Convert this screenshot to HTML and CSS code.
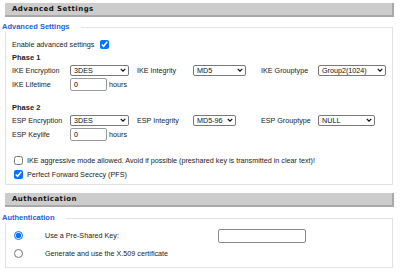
FILE: index.html
```html
<!DOCTYPE html>
<html lang="en">
<head>
  <meta charset="UTF-8" />
  <meta name="viewport" content="width=device-width,initial-scale=1.0" />
  <title>Advanced Settings</title>
  <link rel="stylesheet" href="styles.css">
</head>
<body>
  <div class="page">
    <div class="bar">Advanced Settings</div>
    <fieldset class="group adv">
      <legend>Advanced Settings</legend>
      <label class="enable">Enable advanced settings <input type="checkbox" checked></label>

      <!-- phase 1 -->
      <div class="phase">Phase 1</div>
      <div class="grid">
        <span>IKE Encryption</span>
        <span class="sel w59"><select><option>3DES</option></select><svg viewBox="0 0 8 5"><path d="M1 1l3 3 3-3"/></svg></span>
        <span>IKE Integrity</span>
        <span class="sel w53"><select><option>MD5</option></select><svg viewBox="0 0 8 5"><path d="M1 1l3 3 3-3"/></svg></span>
        <span>IKE Grouptype</span>
        <span class="sel w68"><select><option>Group2(1024)</option></select><svg viewBox="0 0 8 5"><path d="M1 1l3 3 3-3"/></svg></span>
        <span>IKE Lifetime</span>
        <span class="num"><input type="text" value="0"> hours</span>
      </div>

      <!-- phase 2 -->
      <div class="phase p2">Phase 2</div>
      <div class="grid">
        <span>ESP Encryption</span>
        <span class="sel w59"><select><option>3DES</option></select><svg viewBox="0 0 8 5"><path d="M1 1l3 3 3-3"/></svg></span>
        <span>ESP Integrity</span>
        <span class="sel w43"><select><option>MD5-96</option></select><svg viewBox="0 0 8 5"><path d="M1 1l3 3 3-3"/></svg></span>
        <span>ESP Grouptype</span>
        <span class="sel w57"><select><option>NULL</option></select><svg viewBox="0 0 8 5"><path d="M1 1l3 3 3-3"/></svg></span>
        <span>ESP Keylife</span>
        <span class="num"><input type="text" value="0"> hours</span>
      </div>

      <div class="checks">
        <label><input type="checkbox"> IKE aggressive mode allowed. Avoid if possible (preshared key is transmitted in clear text)!</label>
        <label><input type="checkbox" checked> Perfect Forward Secrecy (PFS)</label>
      </div>
    </fieldset>

    <div class="bar">Authentication</div>
    <fieldset class="group auth">
      <legend>Authentication</legend>
      <div class="radio-row">
        <input type="radio" name="auth" checked>
        <span class="rtext">Use a Pre-Shared Key:</span>
        <input type="text" class="psk">
      </div>
      <div class="radio-row">
        <input type="radio" name="auth">
        <span class="rtext">Generate and use the X.509 certificate</span>
      </div>
    </fieldset>
  </div>
</body>
</html>
```

FILE: styles.css
```css
:root{
  --bar-bg:#cccccc;
  --bar-line:#a9a9a9;
  --line:#e2e2e2;
  --blue:#1c63d8;
  --text:#222;
}
*{box-sizing:border-box;margin:0;padding:0}
body{font-family:"Liberation Sans",Arial,sans-serif;font-size:7.2px;color:var(--text);background:#fff}
.page{padding:3px 6px 0 5px;width:400px}

/* section bars */
.bar{height:14px;background:var(--bar-bg);border-bottom:2px solid var(--bar-line);border-right:2px solid var(--bar-line);padding:0 0 0 7px;font-family:"DejaVu Sans",Verdana,sans-serif;font-weight:bold;font-size:7px;letter-spacing:.45px;line-height:12px;color:#111}

/* groups */
.group{border:1px solid var(--line);padding:0 6px;margin:5px 1px 0 0}
.group legend{margin-left:-10px;padding:0 11px 0 0;font-weight:bold;font-size:7.5px;line-height:10px;color:var(--blue)}
.adv{padding-bottom:5px;margin-bottom:8px}
.auth{margin-top:6px;padding-bottom:7px}

.enable{display:flex;align-items:center;gap:6px;height:11px;margin-top:7px}
input[type=checkbox],input[type=radio]{width:9px;height:9px;margin:0}

.phase{font-weight:bold;font-size:7.5px;height:10px;line-height:10px;margin-top:3px}
.phase.p2{margin-top:12px}

.grid{display:grid;grid-template-columns:58px 67px 56px 68px 57px 1fr;grid-template-rows:12px 14px;row-gap:1px;align-items:center;margin-top:1px}
.grid>span{white-space:nowrap}
.grid .num{grid-column:2 / span 5;display:flex;align-items:center;gap:2px;height:14px}

.sel{position:relative;height:11px;display:block}
.sel select{appearance:none;-webkit-appearance:none;width:100%;height:11px;border:1px solid #7a7a7a;border-radius:2px;background:#fff;font-family:inherit;font-size:7.2px;line-height:9px;padding:0 0 0 3px;color:#111}
.sel svg{position:absolute;right:3px;top:3.5px;width:6px;height:4px;fill:none;stroke:#111;stroke-width:1.7}
.w59{width:59px}.w53{width:53px}.w68{width:68px}.w43{width:43px}.w57{width:57px}

.num input{width:37px;height:13px;border:1px solid #9a9a9a;border-radius:2px;font-family:inherit;font-size:7.2px;padding:0 3px}

.checks{margin-top:15px;display:flex;flex-direction:column;gap:5px}
.checks label{display:flex;align-items:center;gap:4px;height:9px;padding-left:2px}

.radio-row{display:flex;align-items:center;height:13px;padding-left:2px;margin-top:6px}
.radio-row+.radio-row{margin-top:5px}
.rtext{margin-left:22px;width:173px}
.psk{width:88px;height:14px;border:1px solid #8a8a8a;border-radius:2px}
```
